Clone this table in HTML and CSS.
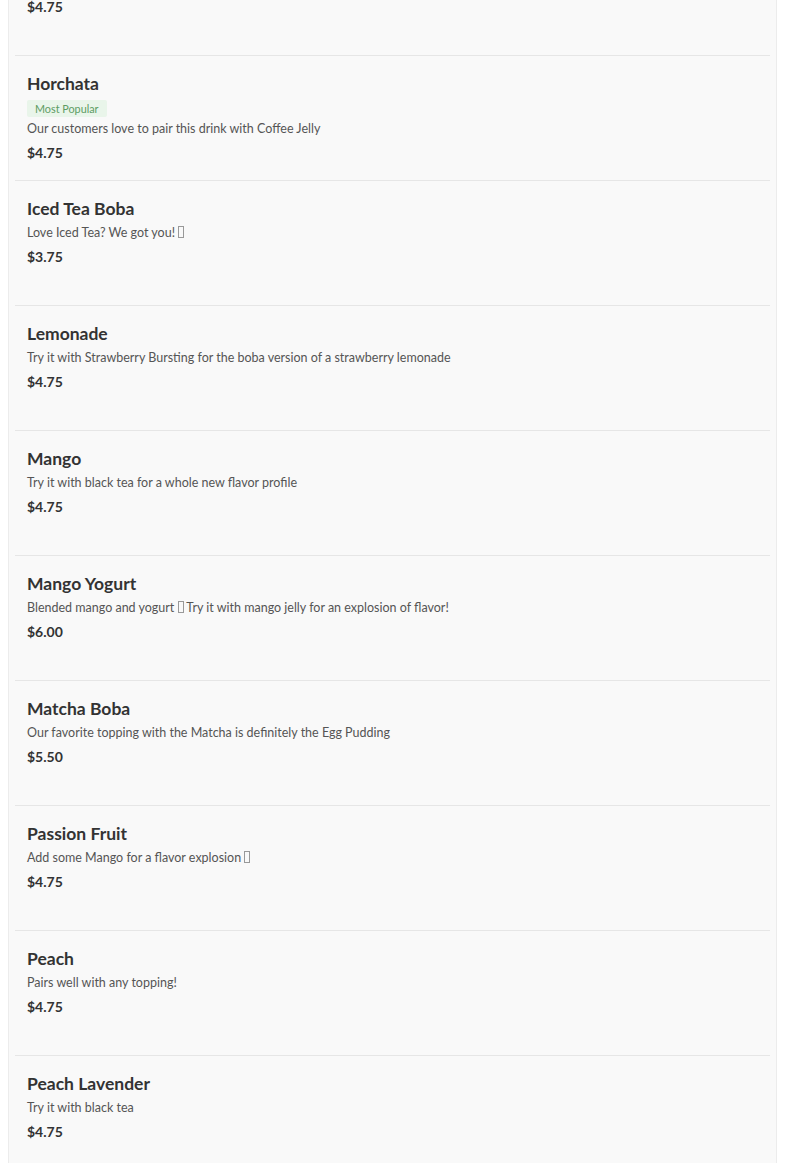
FILE: index.html
```html
<!DOCTYPE html>
<html lang="en">
<head>
<meta charset="utf-8">
<link rel="stylesheet" href="styles.css">
</head>
<body>
<div class="menu">
  <ul class="list">
    <li class="item item-cut"><div class="price">$4.75</div></li>
    <li class="item">
      <div class="name">Horchata</div>
      <span class="badge">Most Popular</span>
      <div class="desc">Our customers love to pair this drink with Coffee Jelly</div>
      <div class="price">$4.75</div>
    </li>
    <li class="item">
      <div class="name">Iced Tea Boba</div>
      <div class="desc">Love Iced Tea? We got you! <span class="tofu"></span></div>
      <div class="price">$3.75</div>
    </li>
    <li class="item">
      <div class="name">Lemonade</div>
      <div class="desc">Try it with Strawberry Bursting for the boba version of a strawberry lemonade</div>
      <div class="price">$4.75</div>
    </li>
    <li class="item">
      <div class="name">Mango</div>
      <div class="desc">Try it with black tea for a whole new flavor profile</div>
      <div class="price">$4.75</div>
    </li>
    <li class="item">
      <div class="name">Mango Yogurt</div>
      <div class="desc">Blended mango and yogurt <span class="tofu"></span> Try it with mango jelly for an explosion of flavor!</div>
      <div class="price">$6.00</div>
    </li>
    <li class="item">
      <div class="name">Matcha Boba</div>
      <div class="desc">Our favorite topping with the Matcha is definitely the Egg Pudding</div>
      <div class="price">$5.50</div>
    </li>
    <li class="item">
      <div class="name">Passion Fruit</div>
      <div class="desc">Add some Mango for a flavor explosion <span class="tofu"></span></div>
      <div class="price">$4.75</div>
    </li>
    <li class="item">
      <div class="name">Peach</div>
      <div class="desc">Pairs well with any topping!</div>
      <div class="price">$4.75</div>
    </li>
    <li class="item">
      <div class="name">Peach Lavender</div>
      <div class="desc">Try it with black tea</div>
      <div class="price">$4.75</div>
    </li>
  </ul>
</div>
</body>
</html>
```

FILE: styles.css
```css
html, body {
  margin: 0;
  padding: 0;
  background: #ffffff;
  font-family: "Lato", "Open Sans", sans-serif;
}

.menu {
  margin: 0 8px;
  background: #f9f9f9;
  border-left: 1px solid #ececec;
  border-right: 1px solid #ececec;
  min-height: 1163px;
  box-sizing: border-box;
}

.list {
  list-style: none;
  margin: 0;
  padding: 0 6px;
}

.item {
  height: 125px;
  box-sizing: border-box;
  padding: 16px 12px 0;
  border-bottom: 1px solid #e6e6e6;
}

.item-cut {
  display: flow-root;
  height: 56px;
  padding-top: 0;
}

.item-cut .price {
  margin-top: -5px;
}

.name {
  font-size: 17.5px;
  font-weight: 700;
  line-height: 24px;
  color: #333333;
}

.badge {
  display: inline-block;
  margin-top: 4px;
  height: 17px;
  line-height: 17px;
  padding: 0 8px;
  background: #e9f5ea;
  color: #5d9c63;
  font-size: 10.8px;
  border-radius: 2px;
}

.desc {
  font-size: 12.5px;
  line-height: 24px;
  color: #555555;
}

.tofu {
  display: inline-block;
  width: 4px;
  height: 10px;
  border: 1px solid #999;
  vertical-align: -1px;
}

.price {
  font-size: 14px;
  font-weight: 700;
  line-height: 24px;
  color: #333333;
}
```
